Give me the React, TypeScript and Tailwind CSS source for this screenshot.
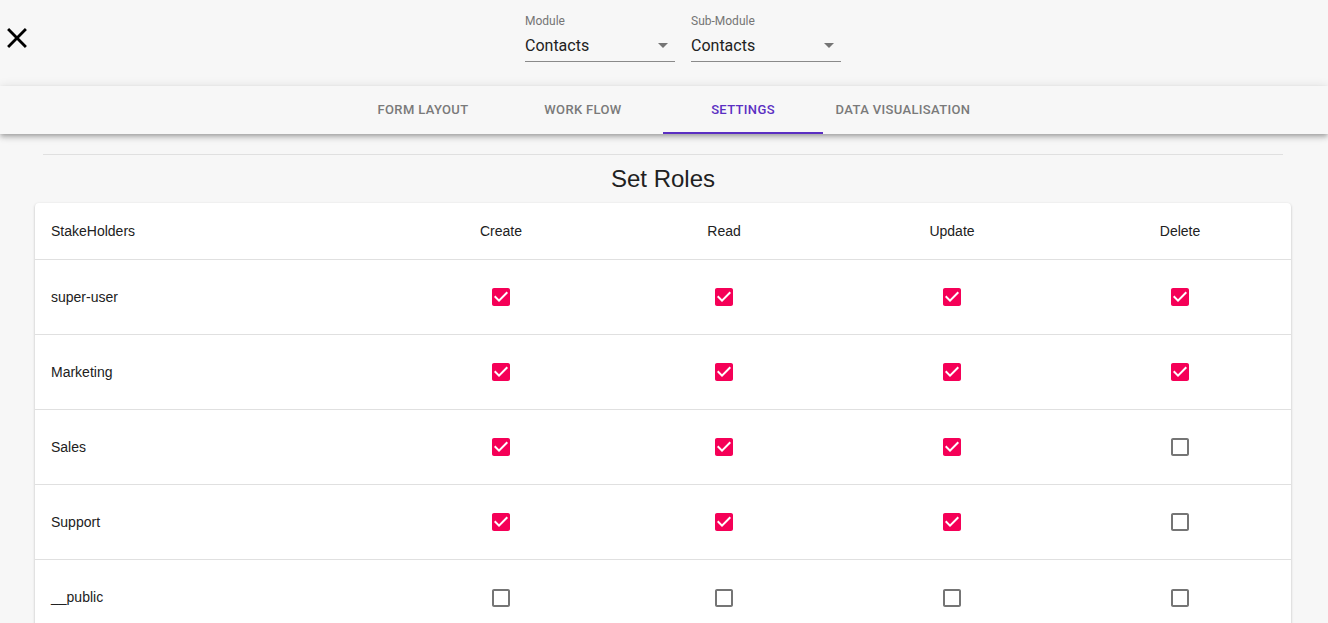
import React from "react";

const CheckedIcon = () => (
  <svg width="24" height="24" viewBox="0 0 24 24" className="block">
    <path fill="#f50057" d="M19 3H5c-1.11 0-2 .9-2 2v14c0 1.1.89 2 2 2h14c1.11 0 2-.9 2-2V5c0-1.1-.89-2-2-2zm-9 14l-5-5 1.41-1.41L10 14.17l7.59-7.59L19 8l-9 9z" />
  </svg>
);

const UncheckedIcon = () => (
  <svg width="24" height="24" viewBox="0 0 24 24" className="block">
    <path fill="#757575" d="M19 5v14H5V5h14m0-2H5c-1.1 0-2 .9-2 2v14c0 1.1.9 2 2 2h14c1.1 0 2-.9 2-2V5c0-1.1-.9-2-2-2z" />
  </svg>
);

const Arrow = () => (
  <svg width="24" height="24" viewBox="0 0 24 24" className="block">
    <path fill="#757575" d="M7 10l5 5 5-5z" />
  </svg>
);

const Select = ({ label, value }: { label: string; value: string }) => (
  <div className="w-[150px] flex flex-col">
    <div className="text-[12px] leading-[16px] text-[#757575] h-[16px]">{label}</div>
    <div className="h-[33px] border-b border-[#8a8a8a] flex items-center justify-between">
      <span className="text-[16px] leading-[19px] text-[#212121] pt-[1px]">{value}</span>
      <span><Arrow /></span>
    </div>
  </div>
);

const rows: { name: string; perms: boolean[] }[] = [
  { name: "super-user", perms: [true, true, true, true] },
  { name: "Marketing", perms: [true, true, true, true] },
  { name: "Sales", perms: [true, true, true, false] },
  { name: "Support", perms: [true, true, true, false] },
  { name: "__public", perms: [false, false, false, false] },
];

const tabs = ["FORM LAYOUT", "WORK FLOW", "SETTINGS", "DATA VISUALISATION"];

export default function App() {
  return (
    <div
      className="min-h-[623px] bg-[#f7f7f7] text-[#212121]"
      style={{ fontFamily: "Roboto, 'Liberation Sans', sans-serif" }}
    >
      {/* Top header */}
      <div className="h-[86px] flex items-start">
        <div className="mt-[21px] w-[34px] h-[34px]">
          <svg width="34" height="34" viewBox="0 0 24 24" className="block">
            <path fill="#000" d="M19 6.41L17.59 5 12 10.59 6.41 5 5 6.41 10.59 12 5 17.59 6.41 19 12 13.41 17.59 19 19 17.59 13.41 12z" />
          </svg>
        </div>
        <div className="ml-[491px] mt-[13px] flex gap-[16px]">
          <Select label="Module" value="Contacts" />
          <Select label="Sub-Module" value="Contacts" />
        </div>
      </div>

      {/* Tabs bar */}
      <div className="h-[48px] bg-[#f7f7f7] shadow-[0_2px_4px_-1px_rgba(0,0,0,0.2),0_4px_5px_0_rgba(0,0,0,0.14),0_1px_10px_0_rgba(0,0,0,0.12)] relative flex justify-center pr-[2px]">
        {tabs.map((t, i) => (
          <div
            key={t}
            className={
              "w-[160px] h-[48px] flex items-center justify-center text-[13px] font-medium tracking-[0.35px] relative " +
              (i === 2 ? "text-[#5b2fc2]" : "text-[#7a7a7a]")
            }
          >
            {t}
            {i === 2 && <div className="absolute left-0 right-0 bottom-0 h-[2px] bg-[#5b2fc2]" />}
          </div>
        ))}
      </div>

      {/* Content */}
      <div className="pt-[20px]" style={{ fontFamily: "'Liberation Sans', Arial, sans-serif" }}>
        <div className="ml-[43px] mr-[45px] h-px bg-[#e0e0e0]" />
        <div className="text-center text-[24px] leading-[32px] mt-[8px] pr-[2px] text-[#212121]">Set Roles</div>
        <div className="mt-[8px] ml-[35px] w-[1256px] bg-white rounded-[4px] shadow-[0_1px_3px_0_rgba(0,0,0,0.2),0_1px_1px_0_rgba(0,0,0,0.14),0_2px_1px_-1px_rgba(0,0,0,0.12)]">
          <div className="grid grid-cols-[354px_224px_222px_234px_222px] h-[57px] items-center border-b border-[#e0e0e0] text-[14px]">
            <div className="pl-[16px]">StakeHolders</div>
            <div className="text-center">Create</div>
            <div className="text-center">Read</div>
            <div className="text-center">Update</div>
            <div className="text-center">Delete</div>
          </div>
          {rows.map((r, ri) => (
            <div
              key={r.name}
              className={
                "grid grid-cols-[354px_224px_222px_234px_222px] h-[75px] items-center text-[14px] " +
                (ri < rows.length - 1 ? "border-b border-[#e0e0e0]" : "")
              }
            >
              <div className="pl-[16px]">{r.name}</div>
              {r.perms.map((p, pi) => (
                <div key={pi} className="flex justify-center">
                  {p ? <CheckedIcon /> : <UncheckedIcon />}
                </div>
              ))}
            </div>
          ))}
        </div>
      </div>
    </div>
  );
}
